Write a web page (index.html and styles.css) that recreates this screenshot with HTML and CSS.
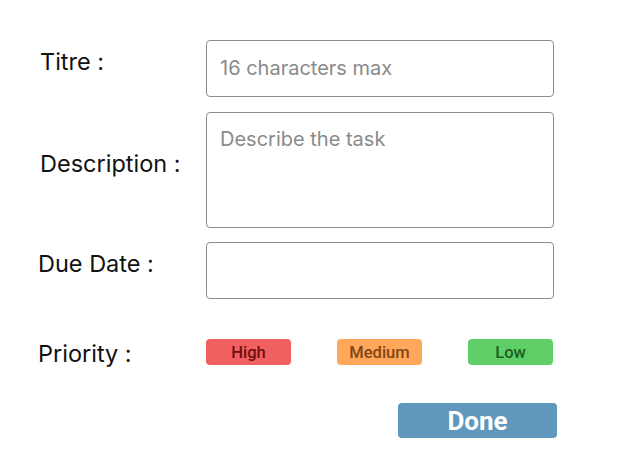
FILE: index.html
```html
<!DOCTYPE html>
<html>
<head>
<meta charset="utf-8">
<link rel="stylesheet" href="styles.css">
</head>
<body>
<form class="form">
  <div class="row row-titre">
    <label class="label label-indent">Titre :</label>
    <input class="field field-short" type="text" placeholder="16 characters max">
  </div>
  <div class="row row-desc">
    <label class="label label-indent">Description :</label>
    <textarea class="field field-area" placeholder="Describe the task"></textarea>
  </div>
  <div class="row row-date">
    <label class="label">Due Date :</label>
    <input class="field field-short" type="text">
  </div>
  <div class="row row-priority">
    <label class="label">Priority :</label>
    <div class="priorities">
      <button type="button" class="prio prio-high">High</button>
      <button type="button" class="prio prio-medium">Medium</button>
      <button type="button" class="prio prio-low">Low</button>
    </div>
  </div>
  <div class="actions">
    <button type="button" class="done">Done</button>
  </div>
</form>
</body>
</html>
```
FILE: styles.css
```css
html, body {
  margin: 0;
  padding: 0;
  background: #ffffff;
}
.form {
  padding: 40px 0 0 38px;
  font-family: Inter, "Noto Sans", sans-serif;
  display: flex;
  flex-direction: column;
}
.row {
  display: flex;
  align-items: center;
}
.row-desc {
  margin-top: 15px;
}
.row-date {
  margin-top: 14px;
}
.row-priority {
  margin-top: 40px;
  align-items: flex-start;
}
.label {
  width: 168px;
  flex: none;
  font-size: 23.5px;
  color: #111;
  padding-bottom: 14px;
}
.label-indent {
  padding-left: 2px;
  width: 166px;
}
.row-priority .label {
  padding-bottom: 0;
  padding-top: 2px;
  line-height: 26px;
}
.field {
  box-sizing: border-box;
  width: 348px;
  border: 1px solid #8c8c8c;
  border-radius: 4px;
  font-family: Inter, "Noto Sans", sans-serif;
  font-size: 20px;
  color: #333;
  padding: 0 13px;
  margin: 0;
  background: #fff;
  outline: none;
}
.field::placeholder {
  color: #8a8a8a;
}
.field-short {
  height: 57px;
  padding-bottom: 1px;
}
.field-area {
  height: 116px;
  padding-top: 14px;
  resize: none;
}
.priorities {
  width: 347px;
  display: flex;
  justify-content: space-between;
}
.prio {
  width: 85px;
  height: 26px;
  border: none;
  border-radius: 4px;
  font-family: Roboto, "Noto Sans", sans-serif;
  font-weight: 500;
  font-size: 16.5px;
  padding: 0;
  margin: 0;
}
.prio-high {
  background: #f16060;
  color: #6e0f0f;
}
.prio-medium {
  background: #ffa75b;
  color: #844512;
}
.prio-low {
  background: #5ecf66;
  color: #1c5e22;
}
.actions {
  display: flex;
  margin-top: 36px;
  padding-left: 360px;
}
.done {
  width: 159px;
  height: 35px;
  border: none;
  border-radius: 4px;
  background: #6097bd;
  color: #ffffff;
  font-family: Roboto, "Noto Sans", sans-serif;
  font-weight: 700;
  font-size: 26px;
  padding: 0;
  margin: 0;
}
```
